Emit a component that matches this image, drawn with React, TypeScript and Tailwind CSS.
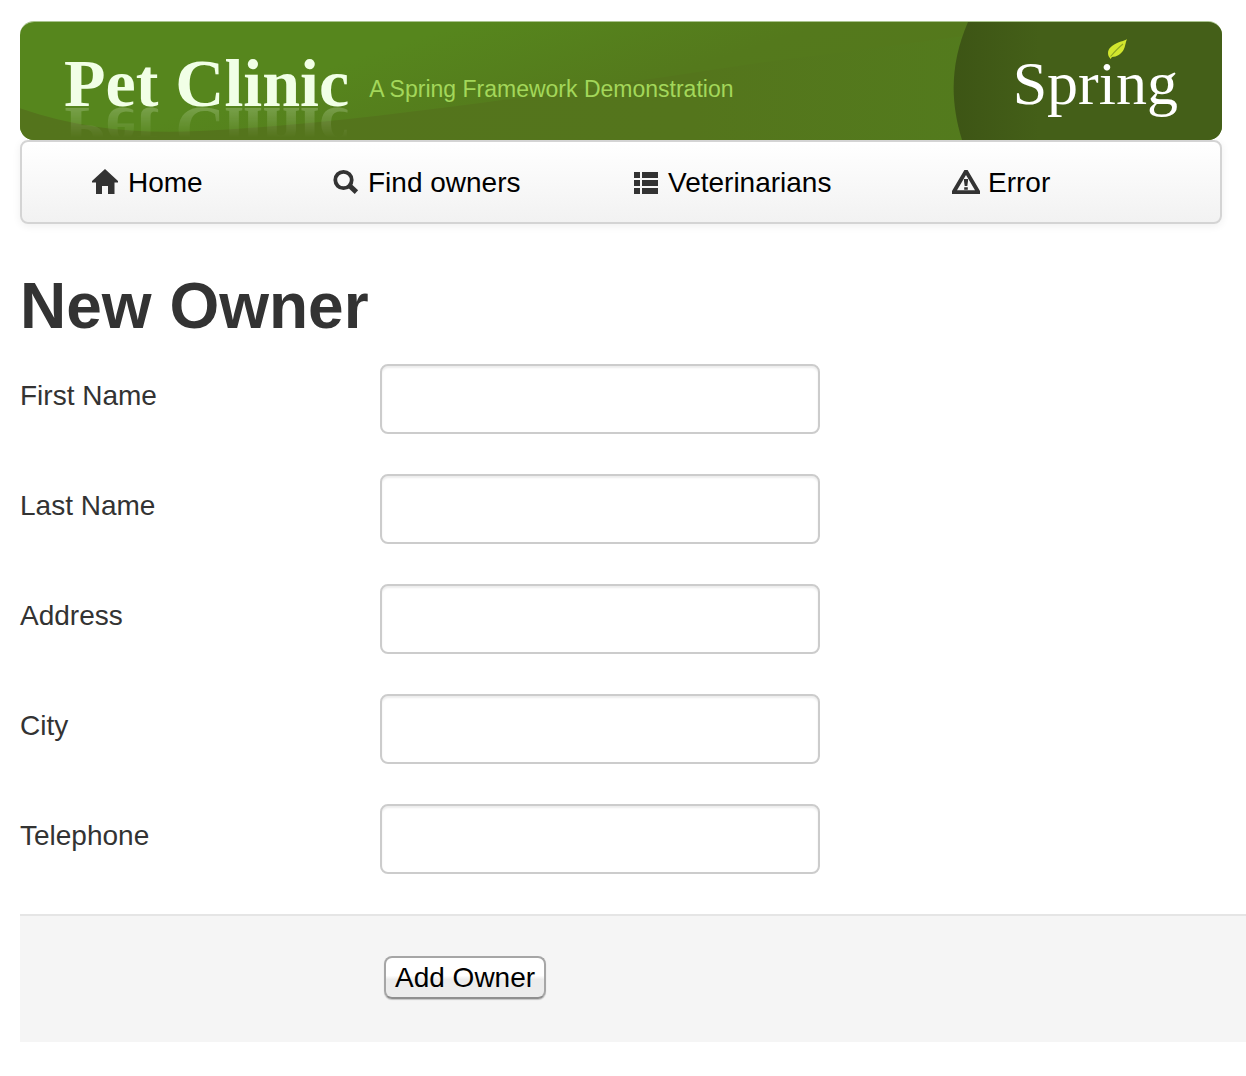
import React from "react";

const fields = [
  { id: "firstName", label: "First Name" },
  { id: "lastName", label: "Last Name" },
  { id: "address", label: "Address" },
  { id: "city", label: "City" },
  { id: "telephone", label: "Telephone" },
];

function HomeIcon() {
  return (
    <svg viewBox="0 0 28 28" className="h-7 w-7 shrink-0" fill="#333" aria-hidden="true">
      <path d="M13 0 L26 12 V13.5 H22.5 V25 H16 V17 H10 V25 H4 V13.5 H0 V12 Z" />
    </svg>
  );
}

function SearchIcon() {
  return (
    <svg viewBox="0 0 28 28" className="h-7 w-7 shrink-0" fill="none" stroke="#333" aria-hidden="true">
      <circle cx="11.5" cy="11" r="8.2" strokeWidth="3.8" />
      <path d="M17.5 16.7 L24.4 23.1" strokeWidth="5" />
    </svg>
  );
}

function ListIcon() {
  return (
    <svg viewBox="0 0 28 28" className="h-7 w-7 shrink-0" fill="#333" aria-hidden="true">
      <path d="M2 3h6v6H2zM10 3h16v6H10zM2 11h6v6H2zM10 11h16v6H10zM2 19h6v6H2zM10 19h16v6H10z" />
    </svg>
  );
}

function WarningIcon() {
  return (
    <svg viewBox="0 0 28 28" className="h-7 w-7 shrink-0" aria-hidden="true">
      <path
        fill="#333"
        fillRule="evenodd"
        d="M12.4 1 h3.2 L28 22 V25 H0 V22 Z M14 6 L5 21.2 H23 Z"
      />
      <path fill="#333" d="M12 10h4v2l-.7 5h-2.6L12 12zM12.2 18.2h3.6v2.6h-3.6z" />
    </svg>
  );
}

const links = [
  { label: "Home", Icon: HomeIcon, width: "w-60" },
  { label: "Find owners", Icon: SearchIcon, width: "w-75" },
  { label: "Veterinarians", Icon: ListIcon, width: "w-80" },
  { label: "Error", Icon: WarningIcon, width: "w-auto" },
];

function BannerArt() {
  return (
    <svg
      viewBox="0 0 1202 119"
      preserveAspectRatio="none"
      className="absolute inset-0 h-full w-full"
      aria-hidden="true"
    >
      <defs>
        <linearGradient id="base" x1="0" x2="1" y1="0" y2="0.3">
          <stop offset="0.34" stopColor="#56861d" />
          <stop offset="0.62" stopColor="#54791c" />
          <stop offset="1" stopColor="#54771c" />
        </linearGradient>
        <linearGradient id="swoosh" x1="0" x2="1" y1="0" y2="0">
          <stop offset="0" stopColor="#54741c" />
          <stop offset="0.7" stopColor="#54751c" />
          <stop offset="1" stopColor="#537b1d" />
        </linearGradient>
        <linearGradient id="panel" x1="0" x2="1" y1="0" y2="0">
          <stop offset="0" stopColor="#3d5515" />
          <stop offset="0.32" stopColor="#445f18" />
          <stop offset="1" stopColor="#445f18" />
        </linearGradient>
      </defs>
      <rect width="1202" height="119" fill="url(#base)" />
      <path d="M0 87 C60 108 120 113 180 110 C340 102 560 68 740 41 L960 12 V119 H0 Z" fill="url(#swoosh)" />
      <path d="M948 0 C930 42 930 80 942 119 H1202 V0 Z" fill="url(#panel)" />
    </svg>
  );
}

function Leaf() {
  return (
    <svg viewBox="0 0 22 22" className="h-[22px] w-[22px]" aria-hidden="true">
      <path d="M21 1 C19 3 12 3.5 6 8 C2 11 1.5 14 2.5 18 L4.5 21 L6 19 C11 19 15 16 17.5 12 C19.5 8.500 19.500 4 21 1 Z" fill="#d2e62e" />
      <path d="M4.500 18.500 C8 14.500 12 10 17 6" fill="none" stroke="#8da522" strokeWidth="1.100" />
    </svg>
  );
}

export default function App() {
  return (
    <div className="min-h-screen bg-white pt-[21px] pb-8 pl-5 font-['Liberation_Sans',Arial,sans-serif] text-[28px] leading-10 text-[#333]">
      <header className="mr-6">
        <div className="relative flex h-[119px] items-start justify-between overflow-hidden rounded-[14px] border-t border-[#a9c38d] pr-11 pl-11">
          <BannerArt />
          <div className="relative flex items-center gap-5 pt-[27px]">
            <div className="font-['Liberation_Serif',serif] text-[68px] leading-[68px] font-bold whitespace-nowrap text-[#f1ffe6] [-webkit-box-reflect:below_-20px_linear-gradient(transparent_40%,rgba(255,255,255,0.3))]">
              Pet Clinic
            </div>
            <div className="pt-[11px] text-[23px] leading-7 whitespace-nowrap text-[#a3d75a]">
              A Spring Framework Demonstration
            </div>
          </div>
          <div className="relative pt-[30px] font-['Liberation_Serif',serif] text-[62px] leading-[62px] text-white">
            Spring
          </div>
          <div className="absolute top-4 right-[94px]">
            <Leaf />
          </div>
        </div>

        <nav className="rounded-lg border-2 border-[#d4d4d4] bg-linear-to-b from-white to-[#f2f2f2] pl-[70px] shadow-[0_2px_8px_rgba(0,0,0,0.065)]">
          <ul className="flex">
            {links.map(({ label, Icon, width }) => (
              <li key={label} className={width}>
                <a href="#" className="inline-flex items-center gap-2 pt-[21px] pb-[19px] whitespace-nowrap text-black">
                  <Icon />
                  {label}
                </a>
              </li>
            ))}
          </ul>
        </nav>
      </header>

      <main>
        <h1 className="mt-[42px] text-[64px] leading-[80px] font-bold">New Owner</h1>
        <form className="mt-[18px]" onSubmit={(e) => e.preventDefault()}>
          <div className="flex flex-col gap-10">
            {fields.map(({ id, label }) => (
              <div key={id} className="flex items-start">
                <label htmlFor={id} className="w-90 shrink-0 pt-3">
                  {label}
                </label>
                <input
                  id={id}
                  name={id}
                  type="text"
                  className="h-[70px] w-110 rounded-lg border-2 border-[#ccc] bg-white px-3 text-[#555] shadow-[inset_0_2px_2px_rgba(0,0,0,0.075)] outline-none"
                />
              </div>
            ))}
          </div>
          <div className="mt-10 flex border-t-2 border-[#e5e5e5] bg-[#f5f5f5] pt-10 pb-[43px] pl-91">
            <button
              type="submit"
              className="rounded-lg border-2 border-[#a6a6a6] border-b-[#8e8e8e] bg-linear-to-b from-white from-45% to-[#ececec] to-55% px-[9px] leading-[39px] text-black shadow-[0_1px_1px_rgba(0,0,0,0.2)]"
            >
              Add Owner
            </button>
          </div>
        </form>
      </main>
    </div>
  );
}
